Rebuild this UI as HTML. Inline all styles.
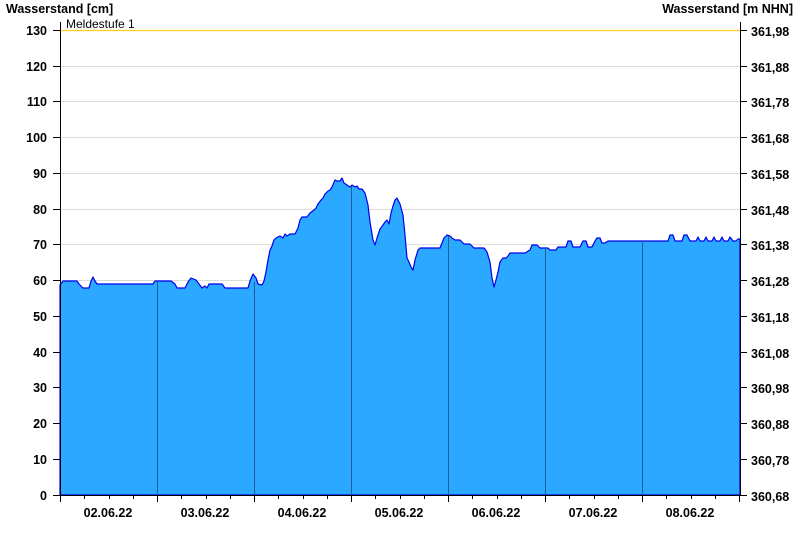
<!DOCTYPE html>
<html><head><style>
html,body{margin:0;padding:0;background:#fff;}
svg{display:block;font-family:"Liberation Sans",Arial,sans-serif;}
.b{font-weight:bold;font-size:12.5px;fill:#000;}
</style></head><body>
<svg width="800" height="550" viewBox="0 0 800 550" xmlns="http://www.w3.org/2000/svg">
<text class="b" x="6" y="13">Wasserstand [cm]</text>
<text class="b" x="793" y="13" text-anchor="end">Wasserstand [m NHN]</text>
<g stroke="#dcdcdc" stroke-width="1">
<line x1="60" x2="740" y1="459.5" y2="459.5"/><line x1="60" x2="740" y1="423.5" y2="423.5"/>
<line x1="60" x2="740" y1="387.5" y2="387.5"/><line x1="60" x2="740" y1="352.5" y2="352.5"/>
<line x1="60" x2="740" y1="316.5" y2="316.5"/><line x1="60" x2="740" y1="280.5" y2="280.5"/>
<line x1="60" x2="740" y1="244.5" y2="244.5"/><line x1="60" x2="740" y1="209.5" y2="209.5"/>
<line x1="60" x2="740" y1="173.5" y2="173.5"/><line x1="60" x2="740" y1="137.5" y2="137.5"/>
<line x1="60" x2="740" y1="101.5" y2="101.5"/><line x1="60" x2="740" y1="66.5" y2="66.5"/>
</g>
<polygon fill="#2ba8ff" stroke="#0000ee" stroke-width="1.2" stroke-linejoin="round" points="60,495 60,285 63,281 77,281 79,284 83,288 89,288 91,281 93,277 95,281 97,284 153,284 155,281 171,281 175,284 177,288 185,288 188,282 191,278 196,280 199,284 202,288 205,286 207,288 209,284 222,284 225,288 248,288 250,281 253,274 256,278 258,284 262,285 264,281 266,272 268,260 270,250 272,246 274,240 276,238 280,236 283,238 285,234 287,236 290,234 295,234 298,228 300,220 302,217 307,217 310,213 314,210 316,208 318,204 321,200 323,198 325,194 328,191 330,190 332,187 335,180 337,181 340,181 342,178 344,183 347,185 350,187 352,185 355,187 357,186 359,189 362,189 365,193 368,205 370,222 373,240 375,245 377,238 380,229 383,225 385,222 387,220 389,224 391,213 393,206 395,200 397,198 400,204 403,215 405,235 407,258 409,262 411,267 413,270 415,260 418,250 420,248 440,248 444,238 447,235 450,236 452,238 455,240 460,240 464,244 470,244 474,248 484,248 487,252 490,262 492,278 494,287 496,280 498,272 500,262 503,258 506,258 508,256 510,253 525,253 530,250 532,245 537,245 540,248 548,248 550,250 556,250 558,247 566,247 568,241 571,241 573,247 580,247 583,241 586,241 588,247 592,247 595,241 597,238 600,238 602,243 605,243 608,241 668,241 670,235 673,235 675,241 682,241 684,235 687,235 690,241 696,241 698,237 700,241 704,241 706,237 708,241 712,241 714,237 716,241 720,241 722,237 724,241 728,241 730,237 733,241 736,241 738,239 740,239 740,495"/>
<g stroke="#1f5f8a" stroke-width="1">
<line x1="157.5" x2="157.5" y1="282" y2="495"/><line x1="254.5" x2="254.5" y1="282" y2="495"/>
<line x1="351.5" x2="351.5" y1="186" y2="495"/><line x1="448.5" x2="448.5" y1="236" y2="495"/>
<line x1="545.5" x2="545.5" y1="248" y2="495"/><line x1="642.5" x2="642.5" y1="241" y2="495"/>
</g>
<line x1="60" x2="740" y1="30.5" y2="30.5" stroke="#ffcc22" stroke-width="1.3"/>
<text x="66" y="28" font-size="12" fill="#000">Meldestufe 1</text>
<g stroke="#000" stroke-width="1">
<line x1="60.5" x2="60.5" y1="22" y2="502"/>
<line x1="740.5" x2="740.5" y1="22" y2="495"/>
<line x1="53" x2="740" y1="495.5" y2="495.5"/>
<line x1="53" x2="60" y1="30.5" y2="30.5"/><line x1="53" x2="60" y1="66.5" y2="66.5"/><line x1="53" x2="60" y1="101.5" y2="101.5"/><line x1="53" x2="60" y1="137.5" y2="137.5"/><line x1="53" x2="60" y1="173.5" y2="173.5"/><line x1="53" x2="60" y1="209.5" y2="209.5"/><line x1="53" x2="60" y1="244.5" y2="244.5"/><line x1="53" x2="60" y1="280.5" y2="280.5"/><line x1="53" x2="60" y1="316.5" y2="316.5"/><line x1="53" x2="60" y1="352.5" y2="352.5"/><line x1="53" x2="60" y1="387.5" y2="387.5"/><line x1="53" x2="60" y1="423.5" y2="423.5"/><line x1="53" x2="60" y1="459.5" y2="459.5"/>
<line x1="740" x2="747" y1="30.5" y2="30.5"/><line x1="740" x2="747" y1="66.5" y2="66.5"/><line x1="740" x2="747" y1="101.5" y2="101.5"/><line x1="740" x2="747" y1="137.5" y2="137.5"/><line x1="740" x2="747" y1="173.5" y2="173.5"/><line x1="740" x2="747" y1="209.5" y2="209.5"/><line x1="740" x2="747" y1="244.5" y2="244.5"/><line x1="740" x2="747" y1="280.5" y2="280.5"/><line x1="740" x2="747" y1="316.5" y2="316.5"/><line x1="740" x2="747" y1="352.5" y2="352.5"/><line x1="740" x2="747" y1="387.5" y2="387.5"/><line x1="740" x2="747" y1="423.5" y2="423.5"/><line x1="740" x2="747" y1="459.5" y2="459.5"/><line x1="740" x2="747" y1="495.5" y2="495.5"/>
<line x1="157.5" x2="157.5" y1="495" y2="502"/><line x1="254.5" x2="254.5" y1="495" y2="502"/><line x1="351.5" x2="351.5" y1="495" y2="502"/><line x1="448.5" x2="448.5" y1="495" y2="502"/><line x1="545.5" x2="545.5" y1="495" y2="502"/><line x1="642.5" x2="642.5" y1="495" y2="502"/><line x1="739.5" x2="739.5" y1="495" y2="502"/>
<line x1="84.5" x2="84.5" y1="495" y2="499"/><line x1="109.5" x2="109.5" y1="495" y2="499"/><line x1="133.5" x2="133.5" y1="495" y2="499"/>
<line x1="181.5" x2="181.5" y1="495" y2="499"/><line x1="206.5" x2="206.5" y1="495" y2="499"/><line x1="230.5" x2="230.5" y1="495" y2="499"/>
<line x1="278.5" x2="278.5" y1="495" y2="499"/><line x1="303.5" x2="303.5" y1="495" y2="499"/><line x1="327.5" x2="327.5" y1="495" y2="499"/>
<line x1="375.5" x2="375.5" y1="495" y2="499"/><line x1="400.5" x2="400.5" y1="495" y2="499"/><line x1="424.5" x2="424.5" y1="495" y2="499"/>
<line x1="472.5" x2="472.5" y1="495" y2="499"/><line x1="497.5" x2="497.5" y1="495" y2="499"/><line x1="521.5" x2="521.5" y1="495" y2="499"/>
<line x1="569.5" x2="569.5" y1="495" y2="499"/><line x1="594.5" x2="594.5" y1="495" y2="499"/><line x1="618.5" x2="618.5" y1="495" y2="499"/>
<line x1="666.5" x2="666.5" y1="495" y2="499"/><line x1="691.5" x2="691.5" y1="495" y2="499"/><line x1="715.5" x2="715.5" y1="495" y2="499"/>
</g>
<g class="b" text-anchor="end">
<text x="47" y="35">130</text><text x="47" y="71">120</text><text x="47" y="106">110</text><text x="47" y="142">100</text><text x="47" y="178">90</text><text x="47" y="214">80</text><text x="47" y="249">70</text><text x="47" y="285">60</text><text x="47" y="321">50</text><text x="47" y="357">40</text><text x="47" y="392">30</text><text x="47" y="428">20</text><text x="47" y="464">10</text><text x="47" y="500">0</text>
</g>
<g class="b">
<text x="751" y="36">361,98</text><text x="751" y="72">361,88</text><text x="751" y="107">361,78</text><text x="751" y="143">361,68</text><text x="751" y="179">361,58</text><text x="751" y="215">361,48</text><text x="751" y="250">361,38</text><text x="751" y="286">361,28</text><text x="751" y="322">361,18</text><text x="751" y="358">361,08</text><text x="751" y="393">360,98</text><text x="751" y="429">360,88</text><text x="751" y="465">360,78</text><text x="751" y="501">360,68</text>
</g>
<g class="b" text-anchor="middle">
<text x="108" y="517">02.06.22</text><text x="205" y="517">03.06.22</text><text x="302" y="517">04.06.22</text><text x="399" y="517">05.06.22</text><text x="496" y="517">06.06.22</text><text x="593" y="517">07.06.22</text><text x="690" y="517">08.06.22</text>
</g>
</svg>
</body></html>
